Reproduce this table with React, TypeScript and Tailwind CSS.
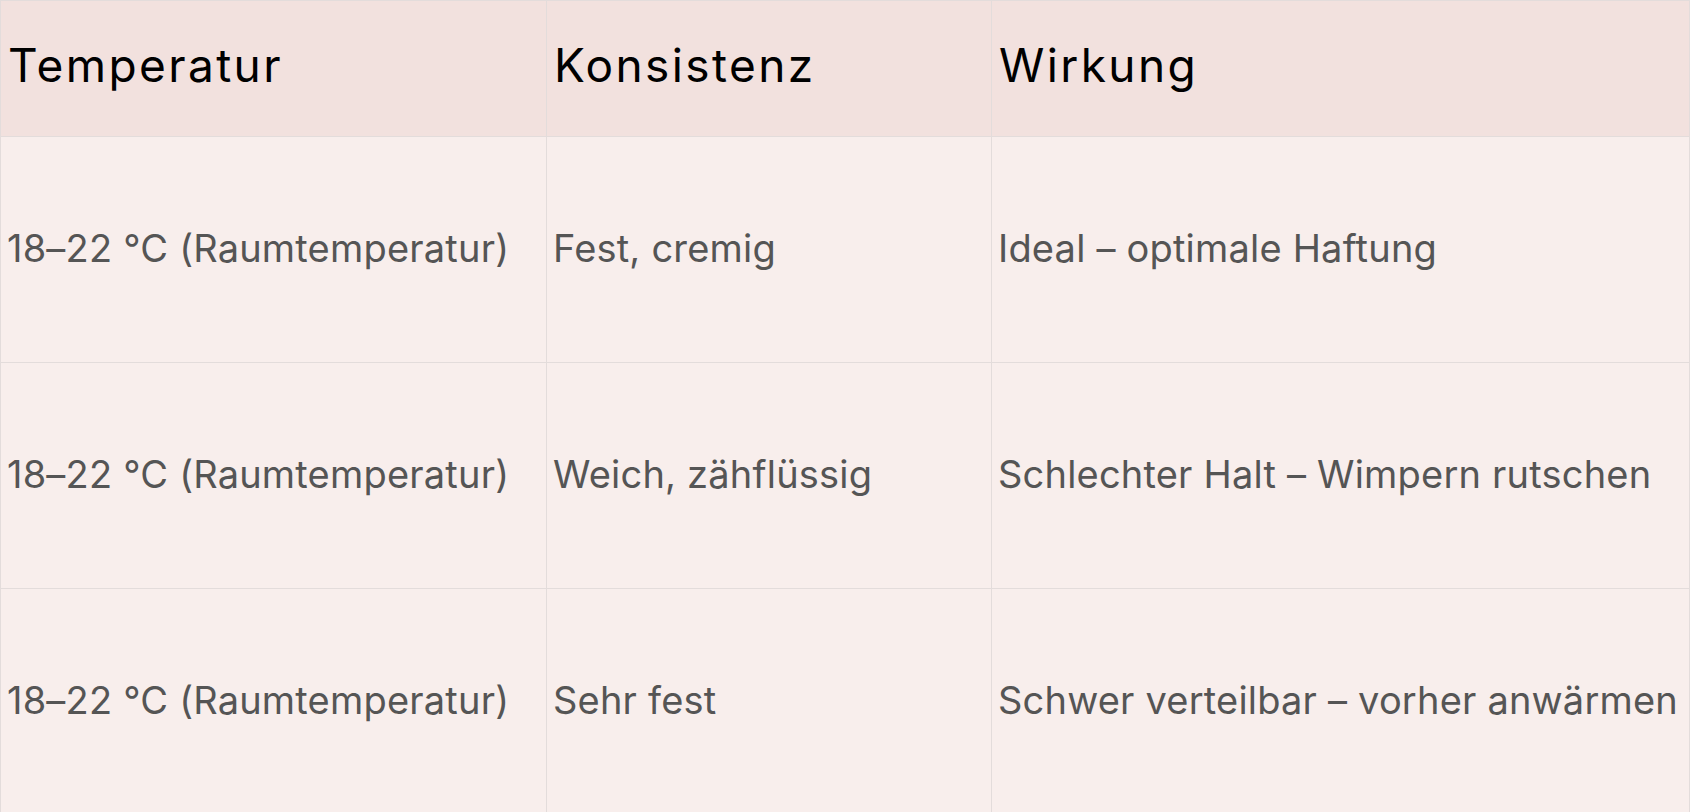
const rows = [
  ["18–22 °C (Raumtemperatur)", "Fest, cremig", "Ideal – optimale Haftung"],
  ["18–22 °C (Raumtemperatur)", "Weich, zähflüssig", "Schlechter Halt – Wimpern rutschen"],
  ["18–22 °C (Raumtemperatur)", "Sehr fest", "Schwer verteilbar – vorher anwärmen"],
];

export default function App() {
  return (
    <div className="min-h-screen bg-white font-['Inter',sans-serif]">
      <table className="w-[1690px] table-fixed border-collapse">
        <colgroup>
          <col className="w-[546px]" />
          <col className="w-[445px]" />
          <col />
        </colgroup>
        <thead>
          <tr className="h-[136px] bg-[#f2e1de]">
            {["Temperatur", "Konsistenz", "Wirkung"].map((h) => (
              <th
                key={h}
                className="border border-[#e3dcdb] px-[7px] pb-[6px] text-left align-middle text-[46px] font-normal tracking-[2.4px] text-black"
              >
                {h}
              </th>
            ))}
          </tr>
        </thead>
        <tbody>
          {rows.map((r, i) => (
            <tr key={i} className="h-[226px] bg-[#f8eeec]">
              {r.map((c, j) => (
                <td
                  key={j}
                  className="border border-[#e3dcdb] px-[6px] pb-[2px] align-middle text-[38px] tracking-[0.2px] whitespace-nowrap text-[#555555]"
                >
                  {c}
                </td>
              ))}
            </tr>
          ))}
        </tbody>
      </table>
    </div>
  );
}
